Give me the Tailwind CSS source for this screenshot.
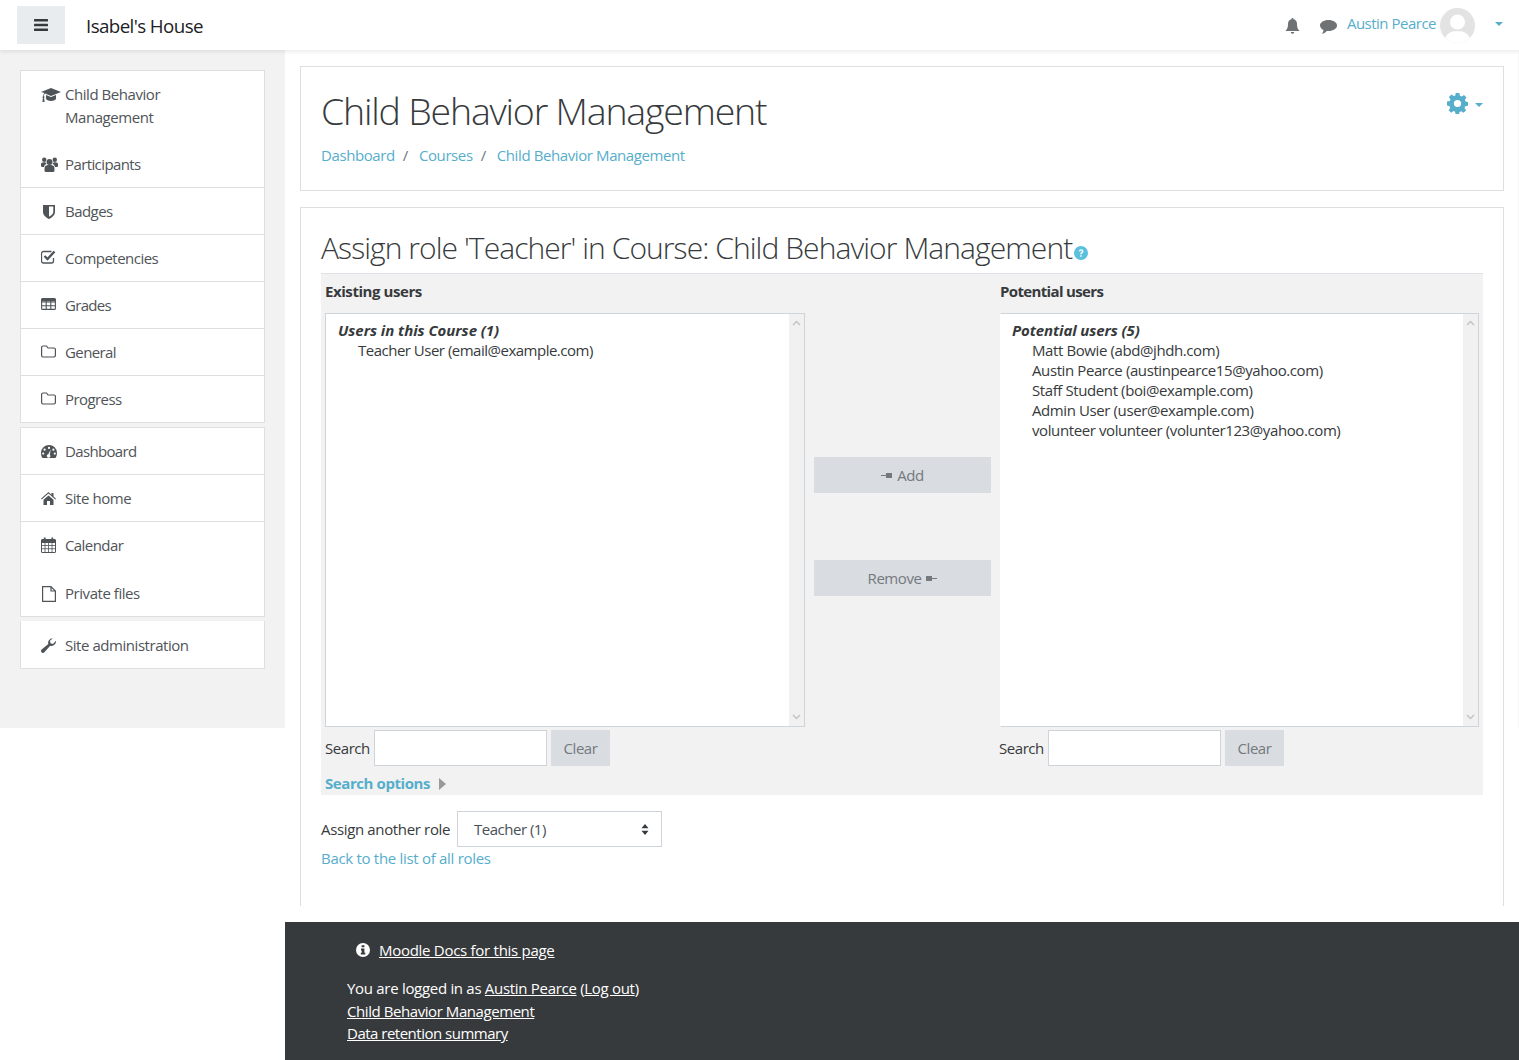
<!DOCTYPE html>
<html lang="en"><head><meta charset="utf-8"><title>Assign roles</title>
<script src="https://cdn.jsdelivr.net/npm/@tailwindcss/browser@4"></script></head>
<body class="bg-white text-[#373a3c] font-['Open_Sans',sans-serif] text-[15px] tracking-[-0.45px] overflow-hidden">
<div class="relative w-[1519px] h-[1060px] overflow-hidden">
<div class="absolute right-0 top-0 w-[1px] h-[728px] bg-[#f7f7f7]"></div>
<header class="relative z-10 h-[50px] bg-white shadow-[0_2px_4px_rgba(0,0,0,0.08)] flex items-center pl-[17px] pr-[16px]">
  <button class="w-[48px] h-[38px] bg-[#e9ecef] flex items-center justify-center">
    <svg class="w-[14px] h-[12px]" viewBox="0 0 14 12" fill="#373a3c"><rect y="0" width="14" height="2.4" rx=".5"/><rect y="4.8" width="14" height="2.4" rx=".5"/><rect y="9.6" width="14" height="2.4" rx=".5"/></svg>
  </button>
  <span class="ml-[21px] mt-[2px] text-[18.75px] tracking-[-0.6px] text-[#1d2125]">Isabel's House</span>
  <div class="ml-auto flex items-center">
    <svg class="w-[15px] h-[16px] mt-[2px]" viewBox="0 0 15 16" fill="#6f7275"><path d="M7.5 0a1 1 0 0 1 1 1.2C11 1.7 12 3.6 12 6c0 4 1.2 5.4 2.6 7H.4C1.8 11.400 3 10 3 6c0-2.400 1-4.300 3.500-4.800A1 1 0 0 1 7.500 0zM5.700 14h3.600a1.800 1.800 0 0 1-3.600 0z"/></svg>
    <svg class="w-[17px] h-[14px] ml-[20px] mt-[3px]" viewBox="0 0 17 14" fill="#6f7275"><path d="M8.500 0C13.200 0 17 2.400 17 5.500S13.200 11 8.500 11c-.6 0-1.200 0-1.700-.1C5.500 12.300 3.700 13.500 1.800 14c.8-1 1.500-2.200 1.700-4C1.400 9 0 7.400 0 5.500 0 2.400 3.800 0 8.500 0z"/></svg>
    <span class="ml-[10px] mb-[3px] text-[#56aecb] tracking-[-0.5px]">Austin Pearce</span>
    <svg class="w-[35px] h-[35px] ml-[4px]" viewBox="0 0 35 35"><defs><clipPath id="av"><circle cx="17.500" cy="17.500" r="17.500"/></clipPath></defs><circle cx="17.500" cy="17.500" r="17.500" fill="#e3e3e3"/><g clip-path="url(#av)" fill="#fff"><circle cx="17.500" cy="14" r="7.500"/><path d="M4 35c1-9 6-12 13.500-12S30 26 31 35z"/></g></svg>
    <svg class="w-[8px] h-[4px] ml-[20px] mb-[3px]" viewBox="0 0 8 4" fill="#56aecb"><path d="M0 0h8L4 4z"/></svg>
  </div>
</header>
<div class="flex h-[1010px]">
  <aside class="w-[285px] h-[678px] bg-[#f2f2f2] pt-[20px] pl-[20px] shrink-0 text-[#4f5458]">
    <div class="w-[245px] border border-[#dfdfdf] bg-white">
      <a class="flex items-start h-[70px] pl-[20px] pt-[12px] leading-[23px]"><span class="w-[24px] h-[23px] flex items-center"><svg class="w-[20px] h-[14px]" viewBox="0 0 20 14" fill="#4f5458"><path d="M10 0l10 4-10 4-6-2.400c-.7.6-1 1.500-1.100 2.600.4.200.6.500.6.900 0 .3-.2.600-.4.800L3.600 14H1.400l.5-4.100a1 1 0 0 1-.4-.8c0-.4.300-.8.700-.9.100-1.400.6-2.500 1.300-3.200L0 4z"/><path d="M5 7l5 2 5-2v3.500C15 12 12.500 13 10 13s-5-1-5-2.500z"/></svg></span><span>Child Behavior<br>Management</span></a>
      <a class="flex items-center h-[47px] pl-[20px] border-b border-[#dfdfdf] tracking-[-0.6px]"><span class="w-[24px]"><svg class="w-[17px] h-[15px]" viewBox="0 0 17 15" fill="#4f5458"><circle cx="8.500" cy="5" r="3"/><circle cx="3.200" cy="2.800" r="2.200"/><circle cx="13.800" cy="2.800" r="2.200"/><path d="M4 9.500C4.500 8.500 6 8 8.500 8s4 .5 4.500 1.500c.5 1 .5 3 .5 4 0 1-1 1.500-2 1.500h-6c-1 0-2-.5-2-1.500 0-1 0-3 .5-4z"/><path d="M0 7c0-1 1-1.800 3.200-1.800.6 0 1 .1 1.300.2.200.6.500 1.100 1 1.500-1.500.5-2.300 1.400-2.500 3H1C.3 9.900 0 9.500 0 9zM17 7c0-1-1-1.800-3.200-1.800-.6 0-1 .1-1.300.2-.2.600-.5 1.100-1 1.500 1.500.5 2.300 1.400 2.500 3H16c.7 0 1-.4 1-.9z"/></svg></span>Participants</a>
      <a class="flex items-center h-[47px] pl-[20px] border-b border-[#dfdfdf] tracking-[-0.55px]"><span class="w-[24px] pl-[2px]"><svg class="w-[12px] h-[15px]" viewBox="0 0 12 15" fill="#4f5458"><path d="M0 1h12v7c0 3-3 5.500-6 7-3-1.500-6-4-6-7zm6 1.500v10.300c2-1.200 4.300-2.900 4.300-4.800V2.500z"/></svg></span>Badges</a>
      <a class="flex items-center h-[47px] pl-[20px] border-b border-[#dfdfdf] tracking-[-0.52px]"><span class="w-[24px] flex"><svg class="w-[15px] h-[14px] mt-[-2px]" viewBox="0 0 15 14" fill="none" stroke="#4f5458"><path d="M12.500 8v3a2 2 0 0 1-2 2H2.500a2 2 0 0 1-2-2V3.500a2 2 0 0 1 2-2h8" stroke-width="1.300"/><path d="M3.500 6l3 3 7-7.500" stroke-width="2.300"/></svg></span>Competencies</a>
      <a class="flex items-center h-[47px] pl-[20px] border-b border-[#dfdfdf] tracking-[-0.7px]"><span class="w-[24px] flex"><svg class="w-[15px] h-[12px] mt-[-2px]" viewBox="0 0 15 12" fill="none" stroke="#4f5458" stroke-width="1.100"><rect x=".6" y=".6" width="13.800" height="10.800" rx="1"/><path d="M.6 4h13.800M.6 7.700h13.800M5.200 3v8.500M9.800 3v8.500"/><path d="M.6 2h13.800" stroke-width="2.800"/></svg></span>Grades</a>
      <a class="flex items-center h-[47px] pl-[20px] border-b border-[#dfdfdf] tracking-[-0.6px]"><span class="w-[24px] flex"><svg class="w-[15px] h-[13px] mt-[-2px]" viewBox="0 0 15 13" fill="none" stroke="#4f5458" stroke-width="1.200"><path d="M2 1h3.500l1.500 2h6a1.400 1.400 0 0 1 1.400 1.400V10.600A1.400 1.400 0 0 1 13 12H2A1.400 1.400 0 0 1 .6 10.600V2.400A1.400 1.400 0 0 1 2 1z"/></svg></span>General</a>
      <a class="flex items-center h-[46px] pl-[20px] tracking-[-0.58px]"><span class="w-[24px] flex"><svg class="w-[15px] h-[13px] mt-[-2px]" viewBox="0 0 15 13" fill="none" stroke="#4f5458" stroke-width="1.200"><path d="M2 1h3.500l1.500 2h6a1.400 1.400 0 0 1 1.400 1.400V10.600A1.400 1.400 0 0 1 13 12H2A1.400 1.400 0 0 1 .6 10.600V2.400A1.400 1.400 0 0 1 2 1z"/></svg></span>Progress</a>
    </div>
    <div class="w-[245px] mt-[4px] border border-[#dfdfdf] bg-white">
      <a class="flex items-center h-[47px] pl-[20px] border-b border-[#dfdfdf] tracking-[-0.65px]"><span class="w-[24px] flex"><svg class="w-[16px] h-[13px]" viewBox="0 0 16 13" fill="#4f5458"><path fill-rule="evenodd" d="M8 0a8 8 0 0 1 8 8c0 1.800-.5 3.500-1.400 5H1.400A9 9 0 0 1 0 8a8 8 0 0 1 8-8zM8 1.800a1.100 1.100 0 1 0 0 2.200 1.100 1.100 0 0 0 0-2.200zM3.600 3.600a1.100 1.100 0 1 0 0 2.200 1.100 1.100 0 0 0 0-2.200zM12.400 3.600a1.100 1.100 0 1 0 0 2.200 1.100 1.100 0 0 0 0-2.200zM2.200 7.500a1.100 1.100 0 1 0 0 2.200 1.100 1.100 0 0 0 0-2.200zM13.800 7.500a1.100 1.100 0 1 0 0 2.200 1.100 1.100 0 0 0 0-2.200zM9.700 4.500L7.300 9.300a1.700 1.700 0 1 0 1.500.500z"/></svg></span>Dashboard</a>
      <a class="flex items-center h-[47px] pl-[20px] border-b border-[#dfdfdf]"><span class="w-[24px] flex"><svg class="w-[15px] h-[13px]" viewBox="0 0 15 13" fill="#4f5458"><path d="M7.500 0l3 2.700V1h2v3.500L15 6.700l-.7.800L7.500 1.500.7 7.500 0 6.700zM2.500 7.800L7.500 3.400l5 4.400V13H9V9H6v4H2.500z"/></svg></span>Site home</a>
      <a class="flex items-center h-[46px] pl-[20px] tracking-[-0.58px]"><span class="w-[24px] flex"><svg class="w-[15px] h-[16px]" viewBox="0 0 15 16" fill="none" stroke="#4f5458"><rect x=".5" y="2.500" width="14" height="13" rx=".5"/><path d="M.5 4.500h14" stroke-width="3"/><path d="M.5 8.500h14M.5 11.700h14M4 6v9.500M7.500 6v9.500M11 6v9.500" stroke-width=".8"/><path d="M3.700 .5v3.500M11.300 .5v3.500" stroke-width="1.800"/></svg></span>Calendar</a>
      <a class="flex items-center h-[48px] pt-[3px] pl-[20px]"><span class="w-[24px] flex"><svg class="w-[14px] h-[16px] ml-[1px]" viewBox="0 0 14 16" fill="none" stroke="#4f5458" stroke-width="1.200"><path d="M.6.6h8.400l4.400 4.400v10.400H.6zM9 .6v4.400h4.400"/></svg></span>Private files</a>
    </div>
    <div class="w-[245px] mt-[4px] border border-t-0 border-[#dfdfdf] bg-white">
      <a class="flex items-center h-[47px] pt-[1px] pl-[20px]"><span class="w-[24px] flex"><svg class="w-[15px] h-[15px]" viewBox="0 0 15 15" fill="#4f5458"><path d="M15 3.500c0 2.400-2 4.400-4.400 4.400-.5 0-1-.1-1.400-.2L3.400 14.300a2 2 0 0 1-2.900-.1c-.8-.8-.7-2 .1-2.800L7.300 5.900A4.500 4.500 0 0 1 11.800.2L9 2.800l.5 2.500 2.500.6L14.700 3z"/></svg></span>Site administration</a>
    </div>
  </aside>
  <div class="w-[1234px] flex flex-col">
    <main class="px-[15px] pt-[16px]">
      <section class="h-[125px] border border-[#dfdfdf] relative pl-[20px] pt-[19px]">
        <h1 class="text-[37.5px] font-light leading-[50px] tracking-[-1.2px]">Child Behavior Management</h1>
        <nav class="mt-[8px] flex text-[#56aecb] leading-[22px] tracking-[-0.4px]"><a>Dashboard</a><span class="text-[#6c757d] mx-[8px]">/</span><a class="ml-[3px]">Courses</a><span class="text-[#6c757d] mx-[8px]">/</span><a class="ml-[3px]">Child Behavior Management</a></nav>
        <div class="absolute right-[20px] top-[26px] flex items-center">
          <svg class="w-[21px] h-[21px]" viewBox="0 0 21 21" fill="#56aecb"><path fill-rule="evenodd" d="M8.600 0h3.800l.5 2.800 1.700.7L17 1.900l2.500 2.500-1.600 2.300.7 1.700 2.400.6v3.800l-2.800.5-.7 1.600 1.600 2.400-2.600 2.500-2.300-1.600-1.700.7-.5 2.700H8.600l-.5-2.800-1.600-.7-2.400 1.700-2.500-2.600 1.600-2.300-.7-1.700L0 12.400V8.600l2.800-.5.7-1.700L1.900 4 4.400 1.500l2.300 1.600 1.700-.7zM10.500 6.900a3.600 3.600 0 1 0 0 7.200 3.600 3.600 0 0 0 0-7.200z"/></svg>
          <svg class="w-[8px] h-[4px] ml-[7px] mt-[3px]" viewBox="0 0 8 4" fill="#56aecb"><path d="M0 0h8L4 4z"/></svg>
        </div>
      </section>
      <section class="h-[699px] mt-[16px] border border-b-0 border-[#dfdfdf] pl-[20px] pr-[20px]">
        <h2 class="text-[30px] font-light h-[65px] pt-[14px] leading-[42px] tracking-[-0.93px] flex items-center">Assign role 'Teacher' in Course: Child Behavior Management<svg class="w-[14px] h-[14px] mt-[10px] ml-[2px]" viewBox="0 0 14 14"><circle cx="7" cy="7" r="7" fill="#5bc0de"/><path d="M4.800 5.300C5 4 6 3.300 7.200 3.300c1.300 0 2.300.8 2.300 2 0 1.700-1.800 1.700-1.800 3H6.200c0-2 1.800-2 1.800-3 0-.4-.4-.7-.8-.7-.5 0-.8.300-1 .9zM6.200 9.300h1.500v1.500H6.200z" fill="#fff"/></svg></h2>
        <div class="h-[522px] bg-[#f2f2f2] border-t border-[#dee2e6] pl-[4px] pr-[4px] text-[#373a3c]">
          <div class="grid grid-cols-[480px_1fr_479px] gap-x-[9px]">
            <div>
              <div class="font-bold h-[39px] pt-[6px] leading-[22px] tracking-[-0.43px]">Existing users</div>
              <div class="h-[414px] border border-[#ced4da] bg-white flex">
                <div class="flex-1 pt-[6px] pl-[12px] leading-[20px]">
                  <div class="font-bold italic tracking-[-0.05px]">Users in this Course (1)</div>
                  <div class="pl-[20px] tracking-[-0.5px]">Teacher User (email@example.com)</div>
                </div>
                <div class="w-[15px] bg-[#f1f1f1] flex flex-col items-center justify-between py-[6px]">
                  <svg class="w-[9px] h-[6px]" viewBox="0 0 9 6" fill="none" stroke="#c4c4c4" stroke-width="1.500"><path d="M1 5l3.500-3.500L8 5"/></svg>
                  <svg class="w-[9px] h-[6px]" viewBox="0 0 9 6" fill="none" stroke="#c4c4c4" stroke-width="1.500"><path d="M1 1l3.500 3.500L8 1"/></svg>
                </div>
              </div>
            </div>
            <div class="flex flex-col pt-[183px]">
              <button class="h-[36px] bg-[#d9dce1] text-[#74797e] flex items-center justify-center gap-[5px]"><svg class="w-[11px] h-[5px]" viewBox="0 0 11 5" fill="#74797e"><path d="M0 2h5V0h6v5H5V3H0z"/></svg>Add</button>
              <button class="h-[36px] mt-[67px] bg-[#d9dce1] text-[#74797e] flex items-center justify-center gap-[5px]">Remove<svg class="w-[11px] h-[5px]" viewBox="0 0 11 5" fill="#74797e"><path d="M0 0h6v2h5v1H6v2H0z"/></svg></button>
            </div>
            <div>
              <div class="font-bold h-[39px] pt-[6px] leading-[22px] tracking-[-0.65px]">Potential users</div>
              <div class="h-[414px] border border-[#ced4da] border-l-white bg-white flex">
                <div class="flex-1 pt-[6px] pl-[11px] leading-[20px] tracking-[-0.4px]">
                  <div class="font-bold italic tracking-[-0.1px]">Potential users (5)</div>
                  <div class="pl-[20px] ">Matt Bowie (abd@jhdh.com)</div>
                  <div class="pl-[20px]">Austin Pearce (austinpearce15@yahoo.com)</div>
                  <div class="pl-[20px]">Staff Student (boi@example.com)</div>
                  <div class="pl-[20px]">Admin User (user@example.com)</div>
                  <div class="pl-[20px]">volunteer volunteer (volunter123@yahoo.com)</div>
                </div>
                <div class="w-[15px] bg-[#f1f1f1] flex flex-col items-center justify-between py-[6px]">
                  <svg class="w-[9px] h-[6px]" viewBox="0 0 9 6" fill="none" stroke="#c4c4c4" stroke-width="1.500"><path d="M1 5l3.500-3.500L8 5"/></svg>
                  <svg class="w-[9px] h-[6px]" viewBox="0 0 9 6" fill="none" stroke="#c4c4c4" stroke-width="1.500"><path d="M1 1l3.500 3.500L8 1"/></svg>
                </div>
              </div>
            </div>
            <div class="flex items-center mt-[3px] h-[36px]"><label class="w-[44px]">Search</label><input class="ml-[5px] w-[173px] h-[36px] bg-white border border-[#ced4da]"><button class="ml-[4px] w-[59px] h-[36px] bg-[#d9dce1] text-[#74797e]">Clear</button></div>
            <div></div>
            <div class="flex items-center mt-[3px] h-[36px] ml-[-1px]"><label class="w-[44px]">Search</label><input class="ml-[5px] w-[173px] h-[36px] bg-white border border-[#ced4da]"><button class="ml-[4px] w-[59px] h-[36px] bg-[#d9dce1] text-[#74797e]">Clear</button></div>
          </div>
          <div class="mt-[6px] h-[22px] flex items-center font-bold text-[#56aecb] tracking-[-0.42px]">Search options<svg class="w-[7px] h-[12px] ml-[9px] mt-[2px]" viewBox="0 0 7 12" fill="#999"><path d="M0 0l7 6-7 6z"/></svg></div>
        </div>
        <div class="mt-[16px] flex items-center h-[36px]"><label class="tracking-[-0.35px]">Assign another role</label>
          <div class="relative ml-[7px]">
            <select class="appearance-none w-[205px] h-[36px] bg-white border border-[#ced4da] pl-[16px] text-[#495057] tracking-[-0.5px]"><option>Teacher (1)</option></select>
            <svg class="absolute right-[13px] top-[13px] w-[8px] h-[11px]" viewBox="0 0 8 11" fill="#373a3c"><path d="M4 0l3.500 4.200h-7zM4 11L.5 6.800h7z"/></svg>
          </div>
        </div>
        <a class="block mt-0 leading-[22px] text-[#56aecb] tracking-[-0.3px]">Back to the list of all roles</a>
      </section>
    </main>
    <footer class="mt-[16px] h-[138px] bg-[#373a3c] text-white pl-[62px] pt-[17px]">
      <div class="flex items-center leading-[22px] pl-[9px] tracking-[-0.28px]"><svg class="w-[14px] h-[14px] mr-[9px]" viewBox="0 0 14 14"><circle cx="7" cy="7" r="7" fill="#fff"/><path d="M5.600 2.300h2.800v2H5.600zM5 5.500h3.400v4.200h.9v1.900H4.800V9.700h.9V7.400H5z" fill="#373a3c"/></svg><a class="underline">Moodle Docs for this page</a></div>
      <div class="mt-[16px] leading-[22.5px] tracking-[-0.3px]">You are logged in as <a class="underline">Austin Pearce</a> (<a class="underline">Log out</a>)</div>
      <div class="leading-[22.5px] tracking-[-0.43px]"><a class="underline">Child Behavior Management</a></div>
      <div class="leading-[22.5px] tracking-[-0.5px]"><a class="underline">Data retention summary</a></div>
    </footer>
  </div>
</div>
</div>
</body></html>
